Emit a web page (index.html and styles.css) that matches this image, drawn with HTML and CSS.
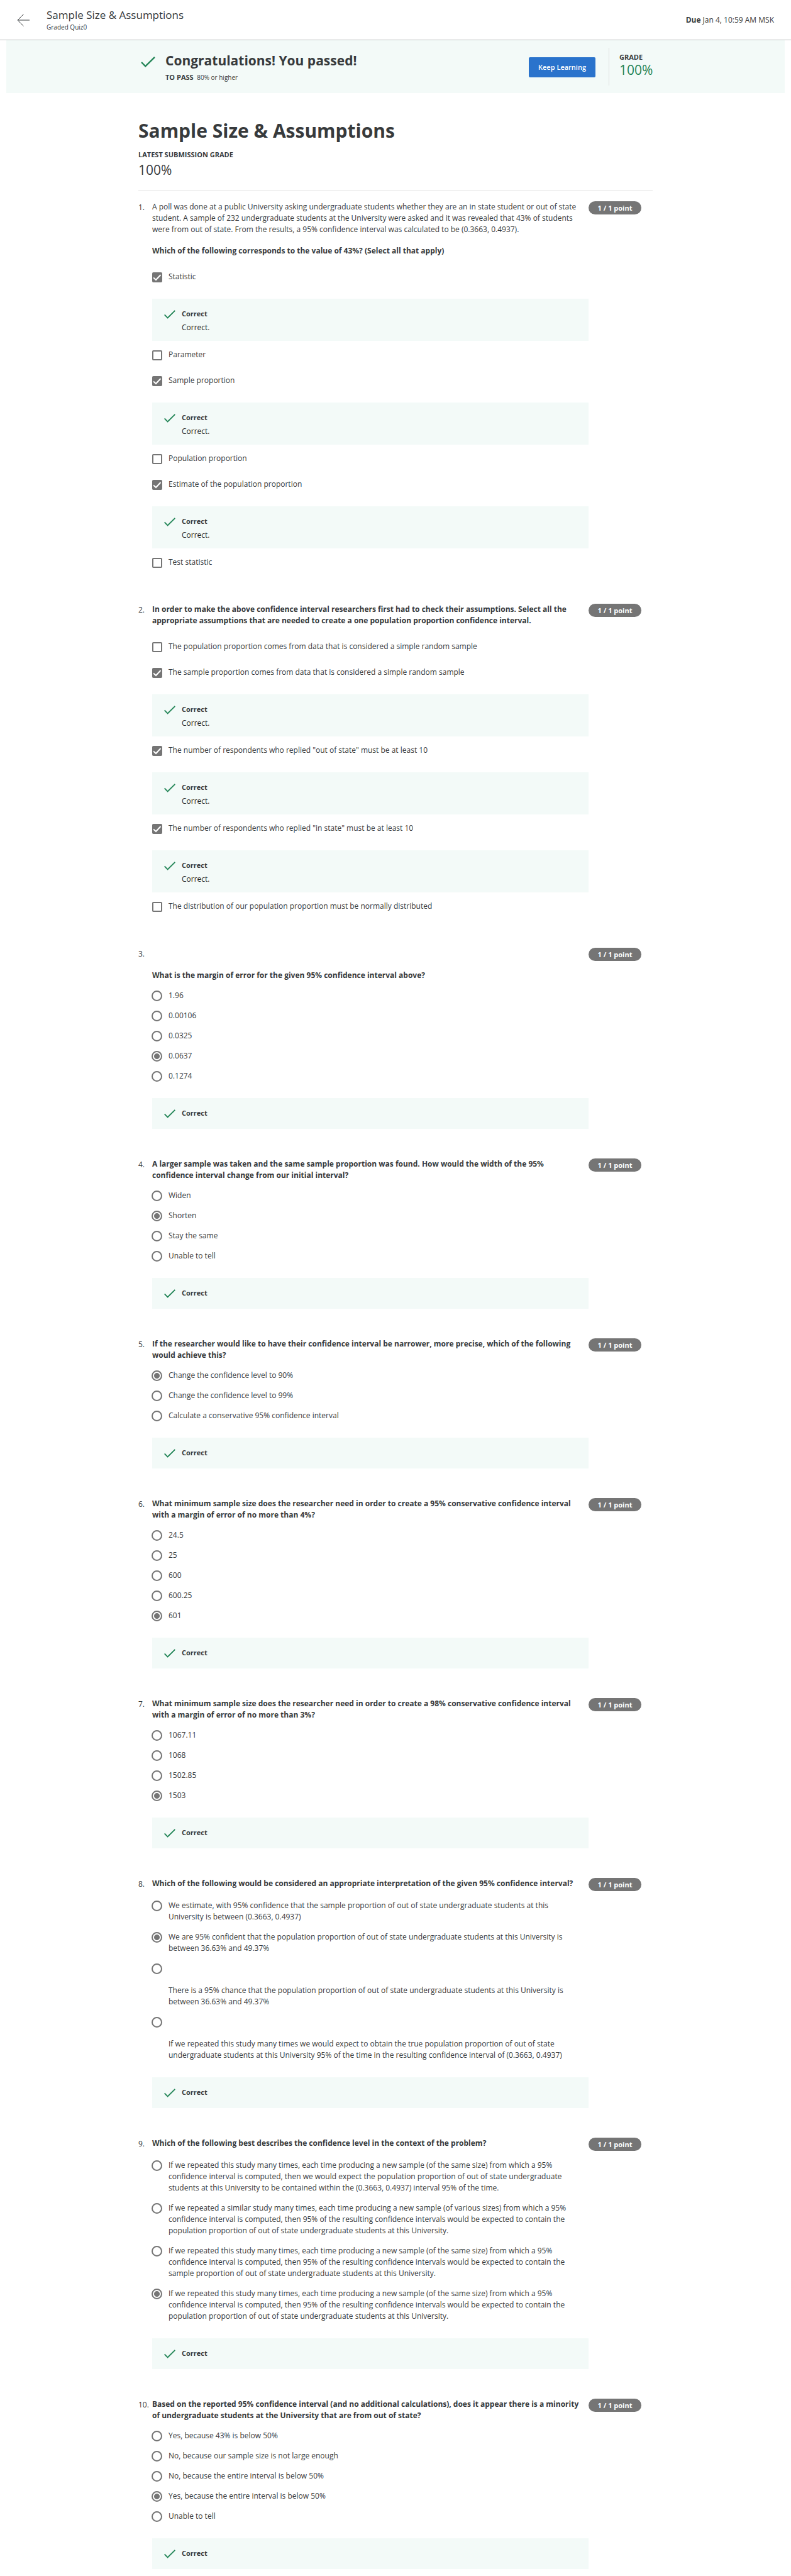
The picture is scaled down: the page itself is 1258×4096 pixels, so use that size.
FILE: index.html
```html
<!DOCTYPE html>
<html lang="en">
<head>
<meta charset="utf-8">
<title>Sample Size &amp; Assumptions</title>
<link rel="stylesheet" href="styles.css">
</head>
<body>
<svg class="sprite" aria-hidden="true">
  <symbol id="tick" viewBox="0 0 80 60"><path d="M3 32 25 54 77 3" fill="none" stroke="currentColor" stroke-width="8"/></symbol>
</svg>

<header class="topbar">
  <a class="back" href="#" aria-label="Back">
    <svg width="20" height="20" viewBox="0 0 20 20" fill="none" stroke="currentColor"><path d="M10.5 .5 1 10 10.5 19.5M1 10H20"/></svg>
  </a>
  <div class="topbar-title">
    <p class="topbar-name">Sample Size &amp; Assumptions</p>
    <p class="topbar-kind">Graded Quiz0</p>
  </div>
  <p class="due"><strong>Due</strong> Jan 4, 10:59 AM MSK</p>
</header>

<section class="banner">
  <div class="banner-inner">
    <svg class="banner-tick"><use href="#tick"/></svg>
    <div class="banner-text">
      <h2>Congratulations! You passed!</h2>
      <p class="to-pass"><strong>TO PASS</strong> <span>80% or higher</span></p>
    </div>
    <button class="keep" type="button">Keep Learning</button>
    <div class="grade">
      <p class="caps">GRADE</p>
      <p class="grade-value">100%</p>
    </div>
  </div>
</section>

<main class="content">
  <div class="summary">
    <h1>Sample Size &amp; Assumptions</h1>
    <p class="caps">LATEST SUBMISSION GRADE</p>
    <p class="summary-value">100%</p>
  </div>

  <section class="question">
    <span class="number">1.</span>
    <div class="prompt">
      <p>A poll was done at a public University asking undergraduate students whether they are an in state student or out of state student. A sample of 232 undergraduate students at the University were asked and it was revealed that 43% of students were from out of state. From the results, a 95% confidence interval was calculated to be (0.3663, 0.4937).</p>
      <p><strong>Which of the following corresponds to the value of 43%? (Select all that apply)</strong></p>
    </div>
    <span class="points">1 / 1 point</span>
    <ul class="options checks">
      <li><label><input type="checkbox" checked><span>Statistic</span></label>
        <div class="feedback"><svg><use href="#tick"/></svg><div><strong>Correct</strong><p>Correct.</p></div></div></li>
      <li><label><input type="checkbox"><span>Parameter</span></label></li>
      <li><label><input type="checkbox" checked><span>Sample proportion</span></label>
        <div class="feedback"><svg><use href="#tick"/></svg><div><strong>Correct</strong><p>Correct.</p></div></div></li>
      <li><label><input type="checkbox"><span>Population proportion</span></label></li>
      <li><label><input type="checkbox" checked><span>Estimate of the population proportion</span></label>
        <div class="feedback"><svg><use href="#tick"/></svg><div><strong>Correct</strong><p>Correct.</p></div></div></li>
      <li><label><input type="checkbox"><span>Test statistic</span></label></li>
    </ul>
  </section>

  <section class="question">
    <span class="number">2.</span>
    <div class="prompt">
      <p><strong>In order to make the above confidence interval researchers first had to check their assumptions. Select all the appropriate assumptions that are needed to create a one population proportion confidence interval.</strong></p>
    </div>
    <span class="points">1 / 1 point</span>
    <ul class="options checks">
      <li><label><input type="checkbox"><span>The population proportion comes from data that is considered a simple random sample</span></label></li>
      <li><label><input type="checkbox" checked><span>The sample proportion comes from data that is considered a simple random sample</span></label>
        <div class="feedback"><svg><use href="#tick"/></svg><div><strong>Correct</strong><p>Correct.</p></div></div></li>
      <li><label><input type="checkbox" checked><span>The number of respondents who replied "out of state" must be at least 10</span></label>
        <div class="feedback"><svg><use href="#tick"/></svg><div><strong>Correct</strong><p>Correct.</p></div></div></li>
      <li><label><input type="checkbox" checked><span>The number of respondents who replied "in state" must be at least 10</span></label>
        <div class="feedback"><svg><use href="#tick"/></svg><div><strong>Correct</strong><p>Correct.</p></div></div></li>
      <li><label><input type="checkbox"><span>The distribution of our population proportion must be normally distributed</span></label></li>
    </ul>
  </section>

  <section class="question">
    <span class="number">3.</span>
    <div class="prompt lead-space">
      <p><strong>What is the margin of error for the given 95% confidence interval above?</strong></p>
    </div>
    <span class="points">1 / 1 point</span>
    <ul class="options">
      <li><label><input type="radio" name="q3"><span>1.96</span></label></li>
      <li><label><input type="radio" name="q3"><span>0.00106</span></label></li>
      <li><label><input type="radio" name="q3"><span>0.0325</span></label></li>
      <li><label><input type="radio" name="q3" checked><span>0.0637</span></label></li>
      <li><label><input type="radio" name="q3"><span>0.1274</span></label></li>
    </ul>
    <div class="feedback result"><svg><use href="#tick"/></svg><strong>Correct</strong></div>
  </section>

  <section class="question">
    <span class="number">4.</span>
    <div class="prompt">
      <p><strong>A larger sample was taken and the same sample proportion was found. How would the width of the 95% confidence interval change from our initial interval?</strong></p>
    </div>
    <span class="points">1 / 1 point</span>
    <ul class="options">
      <li><label><input type="radio" name="q4"><span>Widen</span></label></li>
      <li><label><input type="radio" name="q4" checked><span>Shorten</span></label></li>
      <li><label><input type="radio" name="q4"><span>Stay the same</span></label></li>
      <li><label><input type="radio" name="q4"><span>Unable to tell</span></label></li>
    </ul>
    <div class="feedback result"><svg><use href="#tick"/></svg><strong>Correct</strong></div>
  </section>

  <section class="question">
    <span class="number">5.</span>
    <div class="prompt">
      <p><strong>If the researcher would like to have their confidence interval be narrower, more precise, which of the following would achieve this?</strong></p>
    </div>
    <span class="points">1 / 1 point</span>
    <ul class="options">
      <li><label><input type="radio" name="q5" checked><span>Change the confidence level to 90%</span></label></li>
      <li><label><input type="radio" name="q5"><span>Change the confidence level to 99%</span></label></li>
      <li><label><input type="radio" name="q5"><span>Calculate a conservative 95% confidence interval</span></label></li>
    </ul>
    <div class="feedback result"><svg><use href="#tick"/></svg><strong>Correct</strong></div>
  </section>

  <section class="question">
    <span class="number">6.</span>
    <div class="prompt">
      <p><strong>What minimum sample size does the researcher need in order to create a 95% conservative confidence interval with a margin of error of no more than 4%?</strong></p>
    </div>
    <span class="points">1 / 1 point</span>
    <ul class="options">
      <li><label><input type="radio" name="q6"><span>24.5</span></label></li>
      <li><label><input type="radio" name="q6"><span>25</span></label></li>
      <li><label><input type="radio" name="q6"><span>600</span></label></li>
      <li><label><input type="radio" name="q6"><span>600.25</span></label></li>
      <li><label><input type="radio" name="q6" checked><span>601</span></label></li>
    </ul>
    <div class="feedback result"><svg><use href="#tick"/></svg><strong>Correct</strong></div>
  </section>

  <section class="question">
    <span class="number">7.</span>
    <div class="prompt">
      <p><strong>What minimum sample size does the researcher need in order to create a 98% conservative confidence interval with a margin of error of no more than 3%?</strong></p>
    </div>
    <span class="points">1 / 1 point</span>
    <ul class="options">
      <li><label><input type="radio" name="q7"><span>1067.11</span></label></li>
      <li><label><input type="radio" name="q7"><span>1068</span></label></li>
      <li><label><input type="radio" name="q7"><span>1502.85</span></label></li>
      <li><label><input type="radio" name="q7" checked><span>1503</span></label></li>
    </ul>
    <div class="feedback result"><svg><use href="#tick"/></svg><strong>Correct</strong></div>
  </section>

  <section class="question">
    <span class="number">8.</span>
    <div class="prompt">
      <p><strong>Which of the following would be considered an appropriate interpretation of the given 95% confidence interval?</strong></p>
    </div>
    <span class="points">1 / 1 point</span>
    <ul class="options">
      <li><label><input type="radio" name="q8"><span>We estimate, with 95% confidence that the sample proportion of out of state undergraduate students at this University is between (0.3663, 0.4937)</span></label></li>
      <li><label><input type="radio" name="q8" checked><span>We are 95% confident that the population proportion of out of state undergraduate students at this University is between 36.63% and 49.37%</span></label></li>
      <li><label><input type="radio" name="q8"><span class="lead-space">There is a 95% chance that the population proportion of out of state undergraduate students at this University is between 36.63% and 49.37%</span></label></li>
      <li><label><input type="radio" name="q8"><span class="lead-space">If we repeated this study many times we would expect to obtain the true population proportion of out of state undergraduate students at this University 95% of the time in the resulting confidence interval of (0.3663, 0.4937)</span></label></li>
    </ul>
    <div class="feedback result"><svg><use href="#tick"/></svg><strong>Correct</strong></div>
  </section>

  <section class="question">
    <span class="number">9.</span>
    <div class="prompt">
      <p><strong>Which of the following best describes the confidence level in the context of the problem?</strong></p>
    </div>
    <span class="points">1 / 1 point</span>
    <ul class="options">
      <li><label><input type="radio" name="q9"><span>If we repeated this study many times, each time producing a new sample (of the same size) from which a 95% confidence interval is computed, then we would expect the population proportion of out of state undergraduate students at this University to be contained within the (0.3663, 0.4937) interval 95% of the time.</span></label></li>
      <li><label><input type="radio" name="q9"><span>If we repeated a similar study many times, each time producing a new sample (of various sizes) from which a 95% confidence interval is computed, then 95% of the resulting confidence intervals would be expected to contain the population proportion of out of state undergraduate students at this University.</span></label></li>
      <li><label><input type="radio" name="q9"><span>If we repeated this study many times, each time producing a new sample (of the same size) from which a 95% confidence interval is computed, then 95% of the resulting confidence intervals would be expected to contain the sample proportion of out of state undergraduate students at this University.</span></label></li>
      <li><label><input type="radio" name="q9" checked><span>If we repeated this study many times, each time producing a new sample (of the same size) from which a 95% confidence interval is computed, then 95% of the resulting confidence intervals would be expected to contain the population proportion of out of state undergraduate students at this University.</span></label></li>
    </ul>
    <div class="feedback result"><svg><use href="#tick"/></svg><strong>Correct</strong></div>
  </section>

  <section class="question">
    <span class="number">10.</span>
    <div class="prompt">
      <p><strong>Based on the reported 95% confidence interval (and no additional calculations), does it appear there is a minority of undergraduate students at the University that are from out of state?</strong></p>
    </div>
    <span class="points">1 / 1 point</span>
    <ul class="options">
      <li><label><input type="radio" name="q10"><span>Yes, because 43% is below 50%</span></label></li>
      <li><label><input type="radio" name="q10"><span>No, because our sample size is not large enough</span></label></li>
      <li><label><input type="radio" name="q10"><span>No, because the entire interval is below 50%</span></label></li>
      <li><label><input type="radio" name="q10" checked><span>Yes, because the entire interval is below 50%</span></label></li>
      <li><label><input type="radio" name="q10"><span>Unable to tell</span></label></li>
    </ul>
    <div class="feedback result"><svg><use href="#tick"/></svg><strong>Correct</strong></div>
  </section>
</main>
</body>
</html>
```
FILE: styles.css
```css
* { box-sizing: border-box; }

body {
  margin: 0;
  background: #fff;
  color: #373a3c;
  font-family: "Open Sans", "Noto Sans", sans-serif;
  font-size: 12px;
  line-height: 18px;
}

h1, h2, p, ul { margin: 0; padding: 0; }
ul { list-style: none; }

.sprite { display: none; }

/* Top bar */
.topbar {
  display: flex;
  align-items: center;
  height: 64px;
  padding: 0 27px;
  border-bottom: 1px solid #b7bbba;
}
.back { display: flex; color: #373a3c; margin-right: 27px; }
.topbar-title { flex: 1; }
.topbar-name { font-size: 17px; line-height: 20px; }
.topbar-kind { margin-top: 2px; font-size: 10px; line-height: 14px; }

/* Result banner */
.banner { margin: 0 10px; background: #f3faf8; }
.banner-inner {
  display: flex;
  align-items: center;
  height: 84px;
  max-width: 818px;
  margin: 0 auto;
}
.banner-tick { width: 23px; height: 17px; margin: 0 16px 15px 4px; color: #1f8354; }
.banner-text { flex: 1; }
.banner-text h2 { font-size: 21px; line-height: 30px; }
.to-pass { font-size: 10px; line-height: 16px; margin-top: 4px; }
.to-pass strong { font-size: 11px; }
.to-pass span { margin-left: 3px; }
.keep {
  height: 32px;
  width: 106px;
  margin-top: 2px;
  padding: 0;
  border: 0;
  border-radius: 2px;
  background: #2a73cc;
  color: #fff;
  font: 600 11px/16px "Open Sans", "Noto Sans", sans-serif;
}
.grade {
  width: 70px;
  height: 60px;
  margin-left: 21px;
  padding: 7px 0 0 16px;
  border-left: 1px solid #ddd;
}
.caps { font-size: 11px; font-weight: 700; line-height: 16px; }
.grade-value { font-size: 21px; line-height: 24px; color: #1f8354; }

/* Quiz */
.content { max-width: 818px; margin: 0 auto; padding-bottom: 10px; }
.summary {
  padding: 38px 0 19px;
  border-bottom: 1px solid #ddd;
  margin-bottom: 16px;
}
h1 { font-size: 30px; line-height: 44px; }
.summary .caps { margin-top: 8px; }
.summary-value { margin-top: 2px; font-size: 21px; line-height: 28px; }

.question {
  display: grid;
  grid-template-columns: 22px 1fr 84px;
  padding-right: 18px;
}
.question + .question { margin-top: 47px; }
.number { line-height: 20px; }
.prompt { padding-right: 12px; }
.prompt p + p { margin-top: 16px; }
.lead-space { padding-top: 35px; }
.points {
  height: 21px;
  border-radius: 11px;
  background: #757575;
  color: #fff;
  font-size: 11px;
  font-weight: 700;
  line-height: 21px;
  text-align: center;
}

.options {
  grid-column: 2;
  display: flex;
  flex-direction: column;
  gap: 14px;
  margin-top: 14px;
}
.options label { display: flex; align-items: flex-start; }
.options label span { flex: 1; padding-right: 16px; }
.checks { gap: 13px; margin-top: 23px; }
.checks label { min-height: 28px; }

input {
  appearance: none;
  flex: none;
  margin: 0;
  border: 2px solid #757575;
  background: #fff;
}
input[type="radio"] {
  width: 17px;
  height: 17px;
  margin: 1px 10px 0 -1px;
  border-radius: 50%;
}
input[type="radio"]:checked { background: radial-gradient(circle, #757575 0 4px, #fff 5px); }
input[type="checkbox"] {
  width: 16px;
  height: 16px;
  margin: 2px 10px 0 0;
  border-radius: 2px;
}
input[type="checkbox"]:checked {
  background: #757575 url("data:image/svg+xml,%3Csvg xmlns='http://www.w3.org/2000/svg' viewBox='0 0 12 12'%3E%3Cpath d='M0 6.5 4 10 11.5 2' fill='none' stroke='white' stroke-width='2'/%3E%3C/svg%3E") center / 12px 12px no-repeat;
}

.feedback {
  display: flex;
  align-items: flex-start;
  min-height: 49px;
  padding: 16px 19px 0;
  background: #f3faf8;
}
.feedback svg { width: 18px; height: 14px; margin: 2px 10px 0 0; color: #1f8354; }
.feedback strong { display: block; font-size: 11px; line-height: 16px; }
.feedback p { margin-top: 5px; line-height: 18px; color: #1f1f1f; }
.checks .feedback { height: 67px; margin-top: 16px; }
.result { grid-column: 2; margin-top: 26px; }
```
